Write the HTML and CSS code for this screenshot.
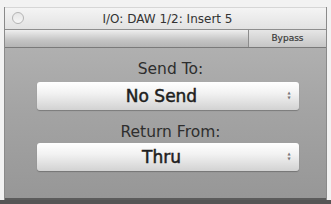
FILE: index.html
```html
<!DOCTYPE html>
<html lang="en">
<head>
  <meta charset="UTF-8"/>
  <title>I/O: DAW 1/2: Insert 5</title>
  <link rel="stylesheet" href="styles.css">
</head>
<body>
  <div class="win">
    <div class="titlebar">
      <span class="close"></span>
      <div class="title">I/O: DAW 1/2: Insert 5</div>
    </div>
    <div class="toolbar">
      <div class="tool-fill"></div>
      <div class="bypass">Bypass</div>
    </div>
    <div class="panel">
      <div class="label">Send To:</div>
      <div class="popup">
        <span class="popup-text">No Send</span>
        <span class="arrows">&#9650;<br>&#9660;</span>
      </div>
      <div class="label second">Return From:</div>
      <div class="popup">
        <span class="popup-text">Thru</span>
        <span class="arrows">&#9650;<br>&#9660;</span>
      </div>
    </div>
  </div>
  <div class="bottom"></div>
</body>
</html>
```

FILE: styles.css
```css
*{box-sizing:border-box;margin:0;padding:0;}
body{width:331px;height:204px;overflow:hidden;background:#f2f2f2;font-family:"DejaVu Sans","Liberation Sans",sans-serif;color:#2a2a2a;position:relative;}
.win{margin:7px 0 0 4px;width:323px;border-left:1px solid #8a8a8a;border-right:1px solid #8a8a8a;display:flex;flex-direction:column;}
.titlebar{height:23px;background:linear-gradient(#f4f4f4,#e2e2e2);border-top:1px solid #d6d6d6;border-bottom:1px solid #8e8e8e;display:flex;align-items:center;justify-content:center;position:relative;}
.close{position:absolute;left:7px;top:4px;width:12px;height:12px;border-radius:50%;border:1px solid #b4b4b4;background:linear-gradient(#e6e6e6,#f6f6f6);}
.title{font-size:12px;color:#333;margin-left:4px;}
.toolbar{height:18px;display:flex;border-bottom:1px solid #7a7a7a;}
.tool-fill{flex:1;background:linear-gradient(#eeeeee,#c4c4c4 60%,#b4b4b4);border-right:1px solid #8c8c8c;}
.bypass{width:77px;background:linear-gradient(#e6e6e6,#c6c6c6);font-size:9px;color:#3a3a3a;text-align:center;line-height:17px;-webkit-text-stroke:0.2px #3a3a3a;}
.panel{height:152px;background:linear-gradient(#b0b0b0,#a4a4a4 40%,#979797);border-bottom:2px solid #5c5c5c;padding:13px 27px 0 31px;display:flex;flex-direction:column;align-items:center;}
.label{font-size:15.5px;color:#2e2e2e;line-height:16px;margin-bottom:5px;margin-left:6px;}
.label.second{margin-top:14px;margin-bottom:3px;}
.popup{width:262px;height:28px;border-radius:3px;background:linear-gradient(#ffffff,#f2f2f2 40%,#d2d2d2);box-shadow:0 1px 1px rgba(0,0,0,0.25);display:flex;align-items:center;justify-content:center;position:relative;}
.popup-text{font-size:17px;color:#1e1e1e;margin-left:-12px;-webkit-text-stroke:0.5px #1e1e1e;}
.arrows{position:absolute;right:8px;top:8px;font-size:4px;line-height:5px;color:#777;}
.bottom{position:absolute;left:0;right:0;bottom:0;height:4px;background:#555;}
```
